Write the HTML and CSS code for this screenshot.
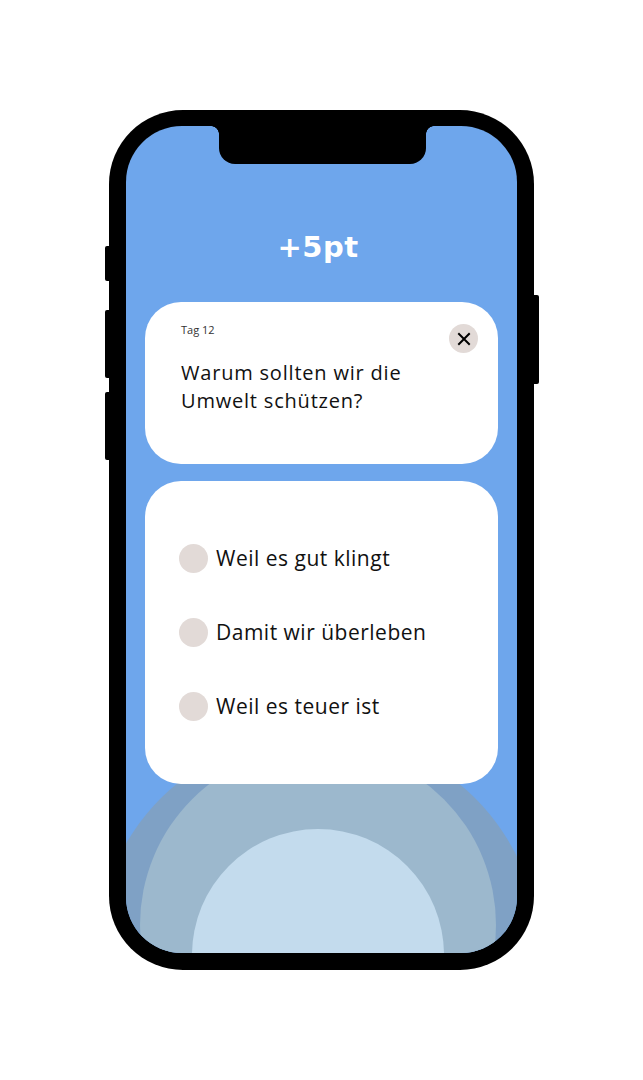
FILE: index.html
```
<!DOCTYPE html>
<html lang="de">
<head>
<meta charset="utf-8">
<title>Quiz</title>
<link rel="stylesheet" href="styles.css">
</head>
<body>
<div class="phone">
  <span class="btn btn-mute"></span>
  <span class="btn btn-vol-up"></span>
  <span class="btn btn-vol-down"></span>
  <span class="btn btn-power"></span>
  <div class="screen">
    <div class="notch"></div>
    <div class="ring ring-outer"></div>
    <div class="ring ring-middle"></div>
    <div class="ring ring-inner"></div>
    <h1 class="points">+5pt</h1>
    <section class="card question-card">
      <div class="card-head">
        <span class="day">Tag 12</span>
        <button class="close" aria-label="Schließen">
          <svg width="14" height="14" viewBox="0 0 14 14"><path d="M2 2 L12 12 M12 2 L2 12" stroke="#000" stroke-width="2" stroke-linecap="square" fill="none"/></svg>
        </button>
      </div>
      <p class="question">Warum sollten wir die<br>Umwelt schützen?</p>
    </section>
    <section class="card answers-card">
      <label class="option"><span class="radio"></span><span class="option-text">Weil es gut klingt</span></label>
      <label class="option"><span class="radio"></span><span class="option-text">Damit wir überleben</span></label>
      <label class="option"><span class="radio"></span><span class="option-text">Weil es teuer ist</span></label>
    </section>
  </div>
</div>
</body>
</html>
```

FILE: styles.css
```
* { box-sizing: border-box; }
html, body { margin: 0; padding: 0; background: #fff; }
body { font-family: "Open Sans", "Noto Sans", sans-serif; }

.phone {
  position: relative;
  width: 425px;
  height: 860px;
  margin: 110px auto 0;
  padding: 16px 17px 17px 17px;
  background: #000;
  border-radius: 74px;
}
.btn {
  position: absolute;
  background: #000;
  border-radius: 2px;
  width: 8px;
}
.btn-mute { left: -4px; top: 136px; height: 35px; }
.btn-vol-up { left: -4px; top: 200px; height: 68px; }
.btn-vol-down { left: -4px; top: 282px; height: 68px; }
.btn-power { right: -5px; top: 185px; height: 89px; }

.screen {
  position: relative;
  height: 827px;
  background: #6ea6ec;
  border-radius: 56px;
  overflow: hidden;
  padding: 101px 19px 0 19px;
}
.notch {
  position: absolute;
  left: 93px;
  top: 0;
  width: 207px;
  height: 38px;
  background: #000;
  border-radius: 0 0 16px 16px;
  z-index: 3;
}
.notch::before, .notch::after {
  content: "";
  position: absolute;
  top: 0;
  width: 8px;
  height: 8px;
}
.notch::before {
  left: -8px;
  background: radial-gradient(circle at 0 100%, transparent 7.5px, #000 8px);
}
.notch::after {
  right: -8px;
  background: radial-gradient(circle at 100% 100%, transparent 7.5px, #000 8px);
}

.ring {
  position: absolute;
  border-radius: 50%;
  z-index: 0;
}
.ring-outer { left: -30px; top: 607px; width: 444px; height: 444px; background: #7fa1c5; }
.ring-middle { left: 14px; top: 621px; width: 356px; height: 356px; background: #9cb8cd; }
.ring-inner { left: 66px; top: 703px; width: 252px; height: 252px; background: #c3dbed; }

.points {
  position: relative;
  z-index: 1;
  margin: 0 0 35px;
  text-align: center;
  font-family: "DejaVu Sans", sans-serif;
  font-weight: 700;
  font-size: 29px;
  line-height: 40px;
  letter-spacing: 0.5px;
  color: #fff;
  padding-right: 7px;
}

.card {
  position: relative;
  z-index: 1;
  background: #fff;
  border-radius: 36px;
}
.question-card {
  height: 162px;
  padding: 21px 20px 0 36px;
  margin-bottom: 17px;
}
.card-head {
  display: flex;
  justify-content: space-between;
  align-items: flex-start;
}
.day {
  font-size: 11px;
  line-height: 14px;
  color: #333;
}
.close {
  width: 29px;
  height: 29px;
  margin-top: 1px;
  border: 0;
  padding: 0;
  border-radius: 50%;
  background: #e2dad7;
  display: flex;
  align-items: center;
  justify-content: center;
}
.question {
  margin: 6px 0 0;
  font-size: 20px;
  line-height: 28px;
  letter-spacing: 0.8px;
  color: #111;
}

.answers-card {
  height: 303px;
  padding: 63px 20px 0 34px;
  display: flex;
  flex-direction: column;
  gap: 45px;
}
.option {
  display: flex;
  align-items: center;
  gap: 8px;
  height: 29px;
}
.radio {
  width: 29px;
  height: 29px;
  border-radius: 50%;
  background: #e2dad7;
  flex: none;
}
.option-text {
  font-size: 21px;
  line-height: 25px;
  letter-spacing: 0.5px;
  color: #111;
}
```
